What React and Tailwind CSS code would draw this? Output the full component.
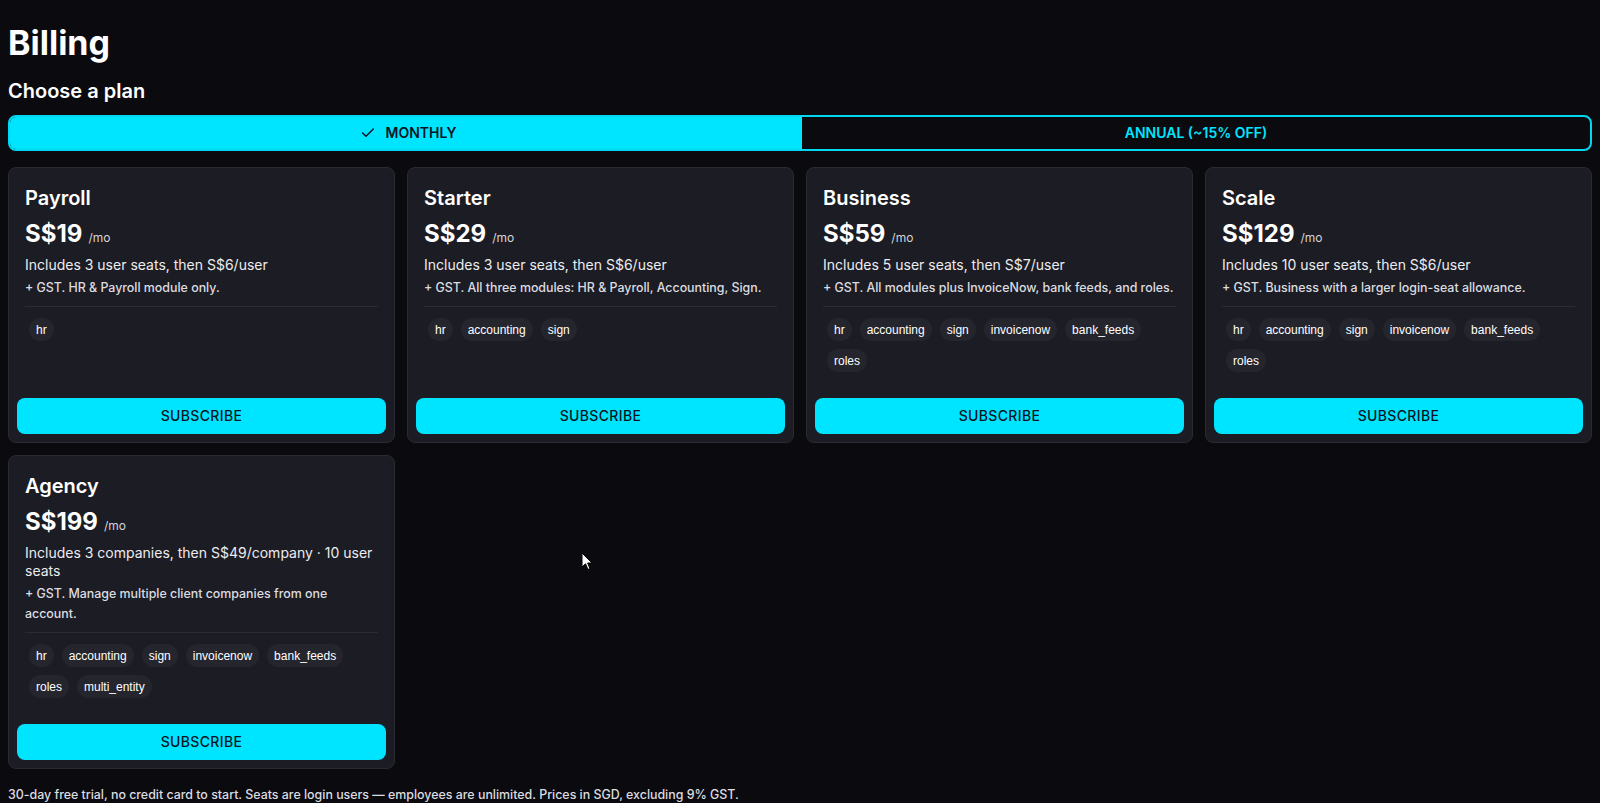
import React from "react";

const plans = [
  {
    name: "Payroll",
    price: "S$19",
    includes: "Includes 3 user seats, then S$6/user",
    note: "+ GST. HR & Payroll module only.",
    modules: ["hr"],
  },
  {
    name: "Starter",
    price: "S$29",
    includes: "Includes 3 user seats, then S$6/user",
    note: "+ GST. All three modules: HR & Payroll, Accounting, Sign.",
    modules: ["hr", "accounting", "sign"],
  },
  {
    name: "Business",
    price: "S$59",
    includes: "Includes 5 user seats, then S$7/user",
    note: "+ GST. All modules plus InvoiceNow, bank feeds, and roles.",
    modules: ["hr", "accounting", "sign", "invoicenow", "bank_feeds", "roles"],
  },
  {
    name: "Scale",
    price: "S$129",
    includes: "Includes 10 user seats, then S$6/user",
    note: "+ GST. Business with a larger login-seat allowance.",
    modules: ["hr", "accounting", "sign", "invoicenow", "bank_feeds", "roles"],
  },
  {
    name: "Agency",
    price: "S$199",
    includes: "Includes 3 companies, then S$49/company · 10 user seats",
    note: "+ GST. Manage multiple client companies from one account.",
    modules: [
      "hr",
      "accounting",
      "sign",
      "invoicenow",
      "bank_feeds",
      "roles",
      "multi_entity",
    ],
  },
];

function PlanCard({ plan }) {
  return (
    <div className="flex flex-col rounded-lg border border-[#2a2a33] bg-[#1c1c24] p-2">
      <div className="px-2 pt-2 pb-[26px]">
        <div className="text-xl leading-7 font-semibold text-white">{plan.name}</div>
        <div className="mt-1.5 flex items-baseline gap-1.5">
          <span className="text-2xl leading-8 font-bold text-white">{plan.price}</span>
          <span className="text-xs text-[#d4d4d8]">/mo</span>
        </div>
        <div className="mt-1.5 text-sm leading-[18px] font-normal text-[#ececef]">
          {plan.includes}
        </div>
        <div className="mt-1 text-[12.4px] leading-5 font-medium text-[#dcdce0]">{plan.note}</div>
        <div className="mt-2 h-px bg-[#2b2b35]" />
        <div className="flex flex-wrap gap-2 px-1 pt-[11px]">
          {plan.modules.map((m) => (
            <span
              key={m}
              className="inline-flex h-[23px] items-center rounded-full bg-[#25252e] px-[7px] font-['Liberation_Sans',_Arial,_sans-serif] text-xs text-white"
            >
              {m}
            </span>
          ))}
        </div>
      </div>
      <button className="mt-auto h-9 w-full rounded-lg bg-[#00e5ff] text-sm font-medium tracking-wide text-[#0b1424]">
        SUBSCRIBE
      </button>
    </div>
  );
}

export default function App() {
  return (
    <div className="relative min-h-screen bg-[#0b0a0f] px-2 pt-[23px] font-['Inter',_'Noto_Sans',_sans-serif] text-white">
      <h1 className="text-[34px] leading-10 font-bold">Billing</h1>
      <h2 className="mt-[14px] text-xl leading-7 font-semibold">Choose a plan</h2>
      <div className="mt-[10px] flex h-9 overflow-hidden rounded-lg border-2 border-[#00d8f2]">
        <button className="flex flex-1 items-center justify-center gap-2.5 bg-[#00e5ff] pl-1 text-sm font-semibold text-[#0b1424]">
          <svg width="16" height="16" viewBox="0 0 24 24" fill="none" stroke="currentColor" strokeWidth="2.2" strokeLinecap="round" strokeLinejoin="round">
            <path d="M20 6 9 17l-5-5" />
          </svg>
          MONTHLY
        </button>
        <button className="flex flex-1 items-center justify-center text-sm font-semibold text-[#00e5ff]">
          ANNUAL (~15% OFF)
        </button>
      </div>
      <div className="mt-4 grid grid-cols-4 gap-3">
        {plans.map((p) => (
          <PlanCard key={p.name} plan={p} />
        ))}
      </div>
      <p className="mt-[18px] text-[12.4px] leading-4 font-medium text-[#dcdce0]">
        30-day free trial, no credit card to start. Seats are login users — employees are unlimited. Prices in SGD, excluding 9% GST.
      </p>
      <svg
        className="absolute left-[581px] top-[552px]"
        width="12"
        height="19"
        viewBox="0 0 12 19"
      >
        <path
          d="M1 1 L1 15 L4.5 11.8 L7 17.5 L9 16.6 L6.6 11 L11 11 Z"
          fill="#ffffff"
          stroke="#000000"
          strokeWidth="1"
          strokeLinejoin="round"
        />
      </svg>
    </div>
  );
}
